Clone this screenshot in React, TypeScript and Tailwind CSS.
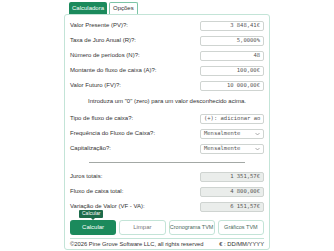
import React from 'react';

const sans = { fontFamily: '"Liberation Sans", Arial, sans-serif' };

const boxBase =
  "flex h-[10px] w-[64px] items-center rounded-[2px] border border-[#cfd4d1] px-[3px] font-['DejaVu_Sans_Mono','Liberation_Mono',monospace] text-[5.5px] text-[#555]";

function Field({ label, value, readOnly }: { label: string; value: string; readOnly?: boolean }) {
  return (
    <div className="flex h-[15px] items-center justify-between">
      <span className="text-[6px] text-[#333]">{label}</span>
      <div className={`${boxBase} justify-end ${readOnly ? 'bg-[#eaedeb]' : 'bg-white'}`}>{value}</div>
    </div>
  );
}

function SelectField({ label, value }: { label: string; value: string }) {
  return (
    <div className="flex h-[15px] items-center justify-between">
      <span className="text-[6px] text-[#333]">{label}</span>
      <div className={`${boxBase} justify-between whitespace-nowrap bg-white`}>
        <span>{value}</span>
        <svg width="5" height="4" viewBox="0 0 10 6" className="shrink-0">
          <path d="M1 1l4 4 4-4" fill="none" stroke="#777" strokeWidth="1.2" />
        </svg>
      </div>
    </div>
  );
}

export default function App() {
  return (
    <div className="flex h-[251px] w-[334px] justify-center bg-white pt-[2px]" style={sans}>
      <div className="flex w-[206px] flex-col">
        <div className="flex gap-[2px] pl-[5px]">
          <div className="flex h-[12px] items-center rounded-t-[2px] bg-[#1b8a5c] px-[3px] text-[6px] text-white">
            Calculadora
          </div>
          <div className="flex h-[12px] items-center rounded-t-[2px] border border-b-0 border-[#7cc4a6] bg-white px-[3px] text-[6px] text-[#333]">
            Opções
          </div>
        </div>
        <div className="rounded-[3px] border border-[#c3e4d7] px-[5px] pt-[3px]">
          <Field label="Valor Presente (PV)?:" value="3 848,41€" />
          <Field label="Taxa de Juro Anual (R)?:" value="5,0000%" />
          <Field label="Número de períodos (N)?:" value="48" />
          <Field label="Montante do fluxo de caixa (A)?:" value="100,00€" />
          <Field label="Valor Futuro (FV)?:" value="10 000,00€" />
          <div className="flex h-[16px] items-center justify-center text-[6px] text-[#333]">
            Introduza um "0" (zero) para um valor desconhecido acima.
          </div>
          <div className="h-[2px]" />
          <div className="flex h-[15px] items-center justify-between">
            <span className="text-[6px] text-[#333]">Tipo de fluxo de caixa?:</span>
            <div className={`${boxBase} whitespace-nowrap bg-white`}>(+): adicionar ao</div>
          </div>
          <SelectField label="Frequência do Fluxo de Caixa?:" value="Mensalmente" />
          <SelectField label="Capitalização?:" value="Mensalmente" />
          <div className="flex h-[13px] items-center justify-center">
            <div className="h-px w-[156px] bg-[#a3a8a5]" />
          </div>
          <Field label="Juros totais:" value="1 351,57€" readOnly />
          <Field label="Fluxo de caixa total:" value="4 800,00€" readOnly />
          <Field label="Variação de Valor (VF - VA):" value="6 151,57€" readOnly />
          <div className="mt-[6px] grid grid-cols-4 gap-[3px]">
            <div className="relative">
              <div className="absolute bottom-[17px] left-[9px] flex h-[8px] items-center rounded-[1px] bg-[#1d6b4a] px-[3px] text-[5px] text-white">
                Calcular
                <div className="absolute -bottom-[2px] left-[12px] h-0 w-0 border-x-[2px] border-t-[2px] border-x-transparent border-t-[#1d6b4a]" />
              </div>
              <div className="flex h-[15px] items-center justify-center rounded-[3px] bg-[#1b8a5c] text-[6px] text-white">
                Calcular
              </div>
            </div>
            <div className="flex h-[15px] items-center justify-center rounded-[3px] border border-[#c3e4d7] bg-white text-[6px] text-[#777]">
              Limpar
            </div>
            <div className="flex h-[15px] items-center justify-center whitespace-nowrap rounded-[3px] border border-[#c3e4d7] bg-white text-[5.5px] text-[#4a6a5c]">
              Cronograma TVM
            </div>
            <div className="flex h-[15px] items-center justify-center whitespace-nowrap rounded-[3px] border border-[#c3e4d7] bg-white text-[5.5px] text-[#4a6a5c]">
              Gráficos TVM
            </div>
          </div>
          <div className="mt-[3px] flex h-[11px] items-center justify-between border-t border-[#c3e4d7] text-[5.8px] text-[#333]">
            <span>©2026 Pine Grove Software LLC, all rights reserved</span>
            <span>€ : DD/MM/YYYY</span>
          </div>
        </div>
      </div>
    </div>
  );
}
